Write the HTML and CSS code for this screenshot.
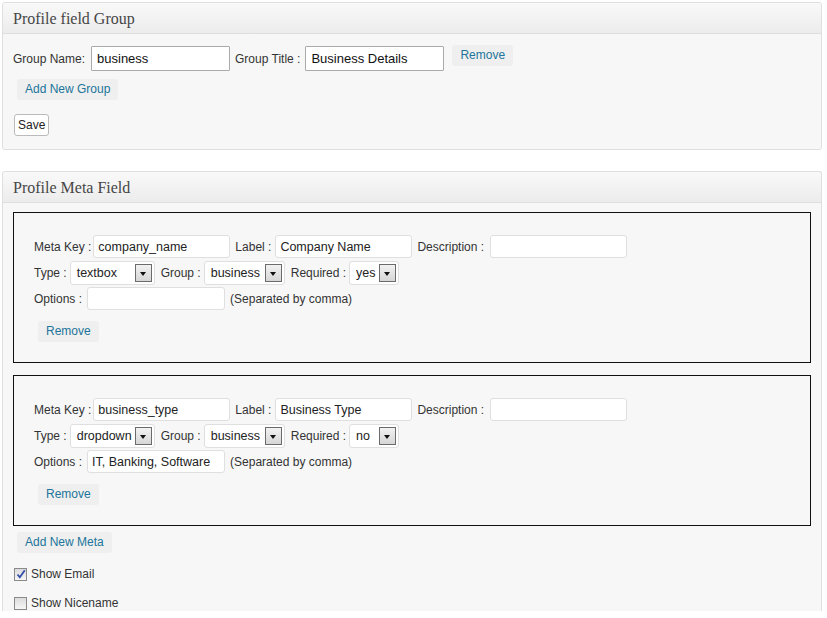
FILE: index.html
```html
<!DOCTYPE html>
<html>
<head>
<meta charset="utf-8">
<link rel="stylesheet" href="styles.css">
</head>
<body>
<div class="panel">
  <div class="panel-head">Profile field Group</div>
  <div class="panel-body">
    <div class="group-row">
      <span class="lbl">Group Name:</span>
      <span class="tinput">business</span>
      <span class="lbl">Group Title :</span>
      <span class="tinput tinput2">Business Details</span>
      <span class="ghost ghost-top">Remove</span>
    </div>
    <div class="btn-row"><span class="ghost">Add New Group</span></div>
    <div class="save-row"><span class="save">Save</span></div>
  </div>
</div>

<div class="panel panel2">
  <div class="panel-head">Profile Meta Field</div>
  <div class="panel-body2">
    <div class="metabox">
      <div class="mrow">
        <span class="lbl">Meta Key :</span><span class="minput w136">company_name</span>
        <span class="lbl">Label :</span><span class="minput w136 ml4">Company Name</span>
        <span class="lbl">Description :</span><span class="minput w136 ml6"></span>
      </div>
      <div class="mrow">
        <span class="lbl">Type :</span><span class="msel w84"><span class="val">textbox</span><span class="arrow"></span></span>
        <span class="lbl">Group :</span><span class="msel w80"><span class="val">business</span><span class="arrow"></span></span>
        <span class="lbl">Required :</span><span class="msel w49 ml6"><span class="val">yes</span><span class="arrow"></span></span>
      </div>
      <div class="mrow">
        <span class="lbl">Options :</span><span class="minput w137 ml5">&nbsp;</span>
        <span class="lbl">(Separated by comma)</span>
      </div>
      <div class="mremove"><span class="ghost">Remove</span></div>
    </div>

    <div class="metabox">
      <div class="mrow">
        <span class="lbl">Meta Key :</span><span class="minput w136">business_type</span>
        <span class="lbl">Label :</span><span class="minput w136 ml4">Business Type</span>
        <span class="lbl">Description :</span><span class="minput w136 ml6"></span>
      </div>
      <div class="mrow">
        <span class="lbl">Type :</span><span class="msel w84"><span class="val">dropdown</span><span class="arrow"></span></span>
        <span class="lbl">Group :</span><span class="msel w80"><span class="val">business</span><span class="arrow"></span></span>
        <span class="lbl">Required :</span><span class="msel w49 ml6"><span class="val">no</span><span class="arrow"></span></span>
      </div>
      <div class="mrow">
        <span class="lbl">Options :</span><span class="minput w137 ml5">IT, Banking, Software</span>
        <span class="lbl">(Separated by comma)</span>
      </div>
      <div class="mremove"><span class="ghost">Remove</span></div>
    </div>

    <div class="addmeta"><span class="ghost">Add New Meta</span></div>
    <div class="chk-row"><span class="chk checked"><svg width="10" height="10" viewBox="0 0 10 10"><path d="M1.5 5.5 L3.8 8.2 L8.8 1.2" fill="none" stroke="#3550a8" stroke-width="1.8"/></svg></span><span class="lbl">Show Email</span></div>
    <div class="chk-row chk-row2"><span class="chk"></span><span class="lbl">Show Nicename</span></div>
  </div>
</div>
</body>
</html>
```

FILE: styles.css
```css
html, body {
  margin: 0;
  padding: 0;
  background: #ffffff;
}
body {
  font-family: "Liberation Sans", Arial, sans-serif;
  font-size: 12px;
  color: #333333;
  padding: 2px 0 0 2px;
}
.panel {
  width: 818px;
  border: 1px solid #dfdfdf;
  border-radius: 3px;
  background: #f7f7f7;
}
.panel2 {
  margin-top: 21px;
  border-bottom: none;
  border-radius: 3px 3px 0 0;
}
.panel-head {
  height: 30px;
  border-bottom: 1px solid #dfdfdf;
  background: linear-gradient(#f9f9f9, #ececec);
  font-family: "Liberation Serif", "Times New Roman", serif;
  font-size: 16px;
  color: #464646;
  line-height: 31px;
  padding-left: 10px;
  border-radius: 3px 3px 0 0;
}
.panel-body {
  padding: 12px 10px 13px 10px;
}
.group-row {
  display: flex;
  align-items: center;
  height: 25px;
}
.lbl {
  white-space: nowrap;
}
.tinput {
  box-sizing: border-box;
  width: 139px;
  height: 25px;
  border: 1px solid #aaaaaa;
  border-radius: 1px;
  background: #ffffff;
  font-size: 13px;
  color: #111111;
  line-height: 23px;
  padding-left: 5px;
  margin: 0 5px 0 6px;
}
.tinput2 {
  margin-left: 5px;
  margin-right: 4px;
}
.ghost {
  display: inline-block;
  box-sizing: border-box;
  height: 21px;
  line-height: 20px;
  padding: 0 8px;
  background: #efefef;
  border-radius: 3px;
  color: #21759b;
  font-size: 12px;
}
.ghost-top {
  margin-left: 4px;
  align-self: flex-start;
  margin-top: -1px;
}
.btn-row {
  margin-top: 8px;
  padding-left: 4px;
}
.save-row {
  margin-top: 14px;
  padding-left: 1px;
}
.save {
  display: inline-block;
  box-sizing: border-box;
  height: 22px;
  line-height: 20px;
  padding: 0 3px;
  border: 1px solid #bbbbbb;
  border-radius: 3px;
  background: #ffffff;
  color: #222222;
}
.panel-body2 {
  padding: 9px 10px 0 10px;
}
.metabox {
  border: 1px solid #111111;
  padding: 22px 20px 20px 20px;
  margin-bottom: 12px;
}
.metabox + .metabox {
  margin-bottom: 6px;
}
.mrow {
  display: flex;
  align-items: center;
  height: 23px;
  margin-bottom: 3px;
}
.minput {
  box-sizing: border-box;
  height: 23px;
  border: 1px solid #dfdfdf;
  border-radius: 3px;
  background: #ffffff;
  font-size: 12.5px;
  color: #222222;
  line-height: 22px;
  padding-left: 4px;
  margin: 0 5px 0 2px;
  white-space: nowrap;
}
.ml4 { margin-left: 4px; }
.ml5 { margin-left: 5px; }
.ml6 { margin-left: 6px; }
.w136 { width: 137px; }
.w137 { width: 138px; }
.msel {
  box-sizing: border-box;
  height: 24px;
  border: 1px solid #dfdfdf;
  border-radius: 3px;
  background: #ffffff;
  font-size: 12.5px;
  color: #222222;
  display: flex;
  align-items: center;
  justify-content: space-between;
  padding: 0 2px 0 6px;
  margin: 0 6px 0 3px;
}
.w84 { width: 85px; }
.w80 { width: 81px; }
.w49 { width: 50px; }
.arrow {
  box-sizing: border-box;
  width: 17px;
  height: 18px;
  border: 1px solid #6b6b6b;
  background: linear-gradient(#f2f2f2, #d6d6d6);
  position: relative;
  flex: none;
}
.arrow::after {
  content: "";
  position: absolute;
  left: 4px;
  top: 7px;
  border-left: 3.5px solid transparent;
  border-right: 3.5px solid transparent;
  border-top: 4px solid #111111;
}
.mremove {
  margin-top: 11px;
  padding-left: 4px;
}
.addmeta {
  padding-left: 4px;
}
.chk-row {
  display: flex;
  align-items: center;
  margin-top: 13px;
  height: 16px;
}
.chk-row2 {
  margin-top: 13px;
}
.chk {
  box-sizing: border-box;
  width: 13px;
  height: 13px;
  border: 1px solid #8a8a8a;
  background: linear-gradient(#dcdcdc, #f6f6f6);
  margin: 0 4px 0 1px;
  display: flex;
  align-items: center;
  justify-content: center;
}
```
